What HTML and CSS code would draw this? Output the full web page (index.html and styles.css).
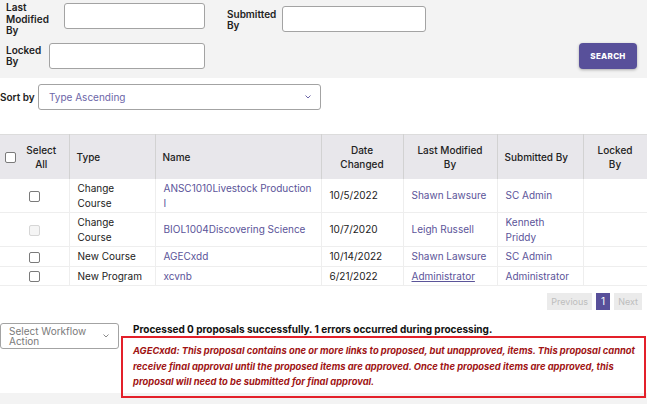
FILE: index.html
```html
<!DOCTYPE html>
<html lang="en">
<head>
    <meta charset="UTF-8">
    <meta name="viewport" content="width=device-width, initial-scale=1.0">
    <title>Proposal Search</title>
    <link rel="stylesheet" href="styles.css">
</head>
<body>
    <div class="filters">
        <div class="filter-row first">
            <div class="field field-modified">
                <label>Last Modified By</label>
                <input type="text">
            </div>
            <div class="field field-submitted">
                <label>Submitted By</label>
                <input type="text">
            </div>
        </div>
        <div class="filter-row second">
            <div class="field field-locked">
                <label>Locked By</label>
                <input type="text">
            </div>
            <button class="btn-search">SEARCH</button>
        </div>
    </div>

    <div class="results">
        <div class="sort-row">
            <span class="sort-label">Sort by</span>
            <div class="select sort-select">
                <span>Type Ascending</span>
                <svg class="chevron" width="6" height="4" viewBox="0 0 6 4"><polyline points="0.5,0.5 3,3 5.5,0.5" fill="none" stroke="currentColor" stroke-width="1"/></svg>
            </div>
        </div>

        <table class="proposals">
            <colgroup>
                <col style="width:69px">
                <col style="width:86px">
                <col style="width:166px">
                <col style="width:82px">
                <col style="width:94px">
                <col style="width:86px">
                <col style="width:64px">
            </colgroup>
            <thead>
                <tr>
                    <th class="col-select"><div class="select-all"><input type="checkbox" class="check"><span>Select<br>All</span></div></th>
                    <th>Type</th>
                    <th>Name</th>
                    <th class="center">Date<br>Changed</th>
                    <th class="center">Last Modified<br>By</th>
                    <th>Submitted By</th>
                    <th class="center">Locked<br>By</th>
                </tr>
            </thead>
            <tbody>
                <tr>
                    <td class="center"><input type="checkbox" class="check"></td>
                    <td>Change Course</td>
                    <td><a href="#">ANSC1010Livestock Production I</a></td>
                    <td>10/5/2022</td>
                    <td><a href="#">Shawn Lawsure</a></td>
                    <td><a href="#">SC Admin</a></td>
                    <td></td>
                </tr>
                <tr>
                    <td class="center"><input type="checkbox" class="check" disabled></td>
                    <td>Change Course</td>
                    <td><a href="#">BIOL1004Discovering Science</a></td>
                    <td>10/7/2020</td>
                    <td><a href="#">Leigh Russell</a></td>
                    <td><a href="#">Kenneth Priddy</a></td>
                    <td></td>
                </tr>
                <tr>
                    <td class="center"><input type="checkbox" class="check"></td>
                    <td>New Course</td>
                    <td><a href="#">AGECxdd</a></td>
                    <td>10/14/2022</td>
                    <td><a href="#">Shawn Lawsure</a></td>
                    <td><a href="#">SC Admin</a></td>
                    <td></td>
                </tr>
                <tr>
                    <td class="center"><input type="checkbox" class="check"></td>
                    <td>New Program</td>
                    <td><a href="#">xcvnb</a></td>
                    <td>6/21/2022</td>
                    <td><a href="#" class="underline">Administrator</a></td>
                    <td><a href="#">Administrator</a></td>
                    <td></td>
                </tr>
            </tbody>
        </table>

        <div class="pager">
            <span class="page-btn disabled">Previous</span>
            <span class="page-btn current">1</span>
            <span class="page-btn disabled">Next</span>
        </div>

        <div class="action-row">
            <div class="select workflow-select">
                <span>Select Workflow<br>Action</span>
                <svg class="chevron" width="6" height="4" viewBox="0 0 6 4"><polyline points="0.5,0.5 3,3 5.5,0.5" fill="none" stroke="currentColor" stroke-width="1"/></svg>
            </div>
            <div class="messages">
                <div class="summary">Processed 0 proposals successfully. 1 errors occurred during processing.</div>
                <div class="error-box">AGECxdd: This proposal contains one or more links to proposed, but unapproved, items. This proposal cannot receive final approval until the proposed items are approved. Once the proposed items are approved, this proposal will need to be submitted for final approval.</div>
            </div>
        </div>
    </div>
</body>
</html>
```

FILE: styles.css
```css
body {
    margin: 0;
    padding-bottom: 11px;
    font-family: Inter, "Noto Sans", sans-serif;
    font-size: 10px;
    line-height: 14.5px;
    color: #222;
    background-color: #f3f3f3;
}
.filters {
    height: 78px;
    box-sizing: border-box;
    padding: 2px 10px 0 6px;
}
.filter-row {
    display: flex;
}
.filter-row.first {
    align-items: flex-start;
    height: 41px;
}
.filter-row.second {
    align-items: center;
    justify-content: space-between;
}
.field {
    display: flex;
    width: 199px;
}
.field label {
    font-weight: 600;
    font-size: 10px;
    line-height: 11.5px;
    color: #222;
}
.field input {
    flex: 1;
    min-width: 0;
    height: 26px;
    box-sizing: border-box;
    border: 1px solid #a3a3a3;
    border-radius: 3px;
    background: #fff;
    padding: 0 6px;
}
.field-modified {
    align-items: flex-start;
}
.field-modified label {
    width: 46px;
    margin-right: 12px;
}
.field-modified input {
    margin-top: 1px;
}
.field-submitted {
    align-items: center;
    margin-left: 22px;
    margin-top: 4px;
}
.field-submitted label {
    width: 48px;
    margin-right: 7px;
    padding-top: 2px;
}
.field-locked {
    align-items: center;
}
.field-locked label {
    width: 33px;
    margin-right: 10px;
}
.btn-search {
    width: 58px;
    height: 26px;
    border: none;
    border-radius: 4px;
    background-color: #58509a;
    color: #fff;
    font-family: Inter, sans-serif;
    font-size: 8px;
    font-weight: 800;
    letter-spacing: 0.3px;
    box-shadow: 0 1px 3px rgba(0, 0, 0, 0.3);
    cursor: pointer;
}
.results {
    background-color: #fff;
    padding-top: 6px;
}
.sort-row {
    display: flex;
    align-items: center;
}
.sort-label {
    font-weight: 600;
    width: 38px;
}
.select {
    display: flex;
    align-items: center;
    justify-content: space-between;
    box-sizing: border-box;
    border: 1px solid #a3a3a3;
    border-radius: 3px;
    background: #fff;
}
.sort-select {
    width: 283px;
    height: 26px;
    padding: 0 9px 0 10px;
    color: #6c66a8;
}
.sort-select .chevron {
    color: #6c66a8;
}
.proposals {
    margin-top: 24px;
    width: 647px;
    table-layout: fixed;
    border-collapse: collapse;
}
.proposals th {
    background-color: #e8e7eb;
    font-weight: 500;
    text-align: left;
    line-height: 14px;
    padding: 8px 7px;
    border-top: 1px solid #dcdcdc;
    border-right: 1px solid #d2d2d2;
}
.proposals td {
    padding: 2px 7px 2px 8px;
    border-right: 1px solid #eee;
    border-bottom: 1px solid #eee;
    vertical-align: middle;
}
.proposals .center {
    text-align: center;
}
.proposals th.col-select {
    padding-left: 5px;
    padding-right: 0;
}
.select-all {
    display: flex;
    align-items: center;
}
.select-all span {
    flex: 1;
    text-align: center;
    padding-right: 2px;
}
.check {
    appearance: none;
    -webkit-appearance: none;
    width: 11px;
    height: 11px;
    margin: 0;
    border: 1px solid #7a7a7a;
    border-radius: 2px;
    background: #fff;
    vertical-align: middle;
}
.check:disabled {
    border-color: #d6d6d6;
    background: #f5f5f5;
}
.proposals a {
    color: #5b5499;
    text-decoration: none;
}
.proposals a.underline {
    text-decoration: underline;
}
.pager {
    display: flex;
    justify-content: flex-end;
    gap: 4px;
    margin-top: 7px;
    padding-right: 5px;
}
.page-btn {
    height: 17px;
    line-height: 17px;
    padding: 0 4px;
    font-size: 9px;
}
.page-btn.disabled {
    background-color: #ebebeb;
    color: #bdbdbd;
}
.page-btn.current {
    background-color: #58509a;
    color: #fff;
    padding: 0 5px;
    font-size: 10px;
}
.action-row {
    display: flex;
    align-items: flex-start;
    margin-top: 13px;
}
.workflow-select {
    width: 119px;
    height: 26px;
    padding: 0 9px 0 8px;
    color: #7a7a7a;
    line-height: 10.5px;
}
.workflow-select .chevron {
    color: #8a8a8a;
}
.messages {
    margin-left: 2px;
    flex: 1;
}
.summary {
    font-weight: 700;
    line-height: 13px;
    padding-left: 12px;
    color: #111;
}
.error-box {
    border: 2px solid #e3202a;
    padding: 5px 4px 6px 10px;
    margin-right: 1px;
    margin-bottom: -5px;
    color: #a01414;
    font-size: 9.4px;
    font-weight: 700;
    font-style: italic;
    line-height: 15.5px;
}
```
